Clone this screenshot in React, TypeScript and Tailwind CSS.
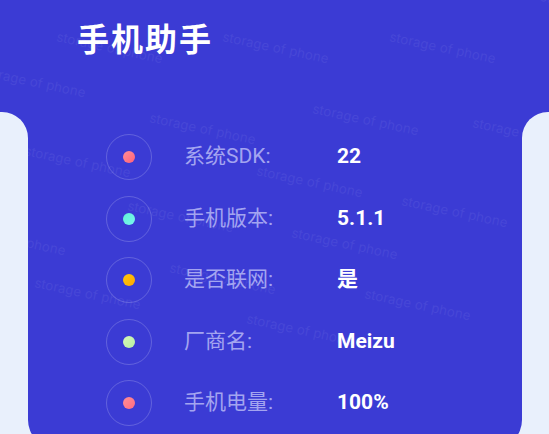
import React from "react";

const rows = [
  { label: "系统SDK:", value: "22", dot: "bg-gradient-to-br from-[#ff8e96] to-[#ff5f7a]" },
  { label: "手机版本:", value: "5.1.1", dot: "bg-gradient-to-br from-[#5ef3d6] to-[#7af3ee]" },
  { label: "是否联网:", value: "是", dot: "bg-gradient-to-br from-[#ffc90a] to-[#ffa502]" },
  { label: "厂商名:", value: "Meizu", dot: "bg-gradient-to-br from-[#d6f8b8] to-[#b6efa2]" },
  { label: "手机电量:", value: "100%", dot: "bg-gradient-to-br from-[#ff8e96] to-[#ff6a82]" },
];

// watermark spots, written out so tailwind picks them up
const marks = [
  "left-[57px] top-[28px]",
  "left-[223px] top-[28px]",
  "left-[-20px] top-[62px]",
  "left-[150px] top-[109px]",
  "left-[390px] top-[28px]",
  "left-[458px] top-[-30px]",
  "left-[313px] top-[100px]",
  "left-[473px] top-[114px]",
  "left-[25px] top-[142px]",
  "left-[257px] top-[162px]",
  "left-[402px] top-[192px]",
  "left-[128px] top-[197px]",
  "left-[292px] top-[224px]",
  "left-[170px] top-[259px]",
  "left-[35px] top-[274px]",
  "left-[365px] top-[285px]",
  "left-[247px] top-[310px]",
  "left-[-40px] top-[220px]",
];

export default function App() {
  return (
    <div className="relative w-[549px] h-[434px] overflow-hidden bg-[#e9f0fc] flex flex-col font-['Roboto','Noto_Sans_CJK_SC',sans-serif]">
      {/* header */}
      <div className="h-[112px] shrink-0 bg-[#3b3bd4] pl-[77px] pt-[17px]">
        <h1 className="relative z-20 text-[32px] leading-[40px] font-bold text-white tracking-[2px] font-['Noto_Sans_CJK_SC',sans-serif]">
          手机助手
        </h1>
      </div>

      <div className="flex h-[336px] shrink-0">
        <div className="w-[28px] bg-[#3b3bd4]">
          <div className="relative z-20 h-full bg-[#e9f0fc] rounded-tr-[26px]" />
        </div>

        <div className="flex-1 bg-[#3b3bd4] rounded-b-[28px] pt-[22px] pl-[78px]">
          <div className="relative z-20 flex flex-col gap-[15.5px]">
            {rows.map((r) => (
              <div key={r.label} className="flex items-center h-[46px]">
                <div className="w-[46px] h-[46px] rounded-full border border-white/20 flex items-center justify-center">
                  <div className={`w-[12px] h-[12px] rounded-full ${r.dot}`} />
                </div>
                <div className="ml-[32px] w-[153px] text-[21px] text-[#a3a4f0]">{r.label}</div>
                <div className="text-[21px] font-bold text-white">{r.value}</div>
              </div>
            ))}
          </div>
        </div>

        <div className="w-[27px] bg-[#3b3bd4]">
          <div className="relative z-20 h-full bg-[#e9f0fc] rounded-tl-[26px]" />
        </div>
      </div>

      {/* faint watermark text */}
      <div className="absolute inset-0 z-10 pointer-events-none">
        {marks.map((m, i) => (
          <span
            key={i}
            className={`absolute ${m} origin-left rotate-[12deg] whitespace-nowrap text-[13px] leading-[16px] font-light tracking-[0.3px] text-white/[0.07] font-['Inter',sans-serif]`}
          >
            storage of phone
          </span>
        ))}
      </div>
    </div>
  );
}
